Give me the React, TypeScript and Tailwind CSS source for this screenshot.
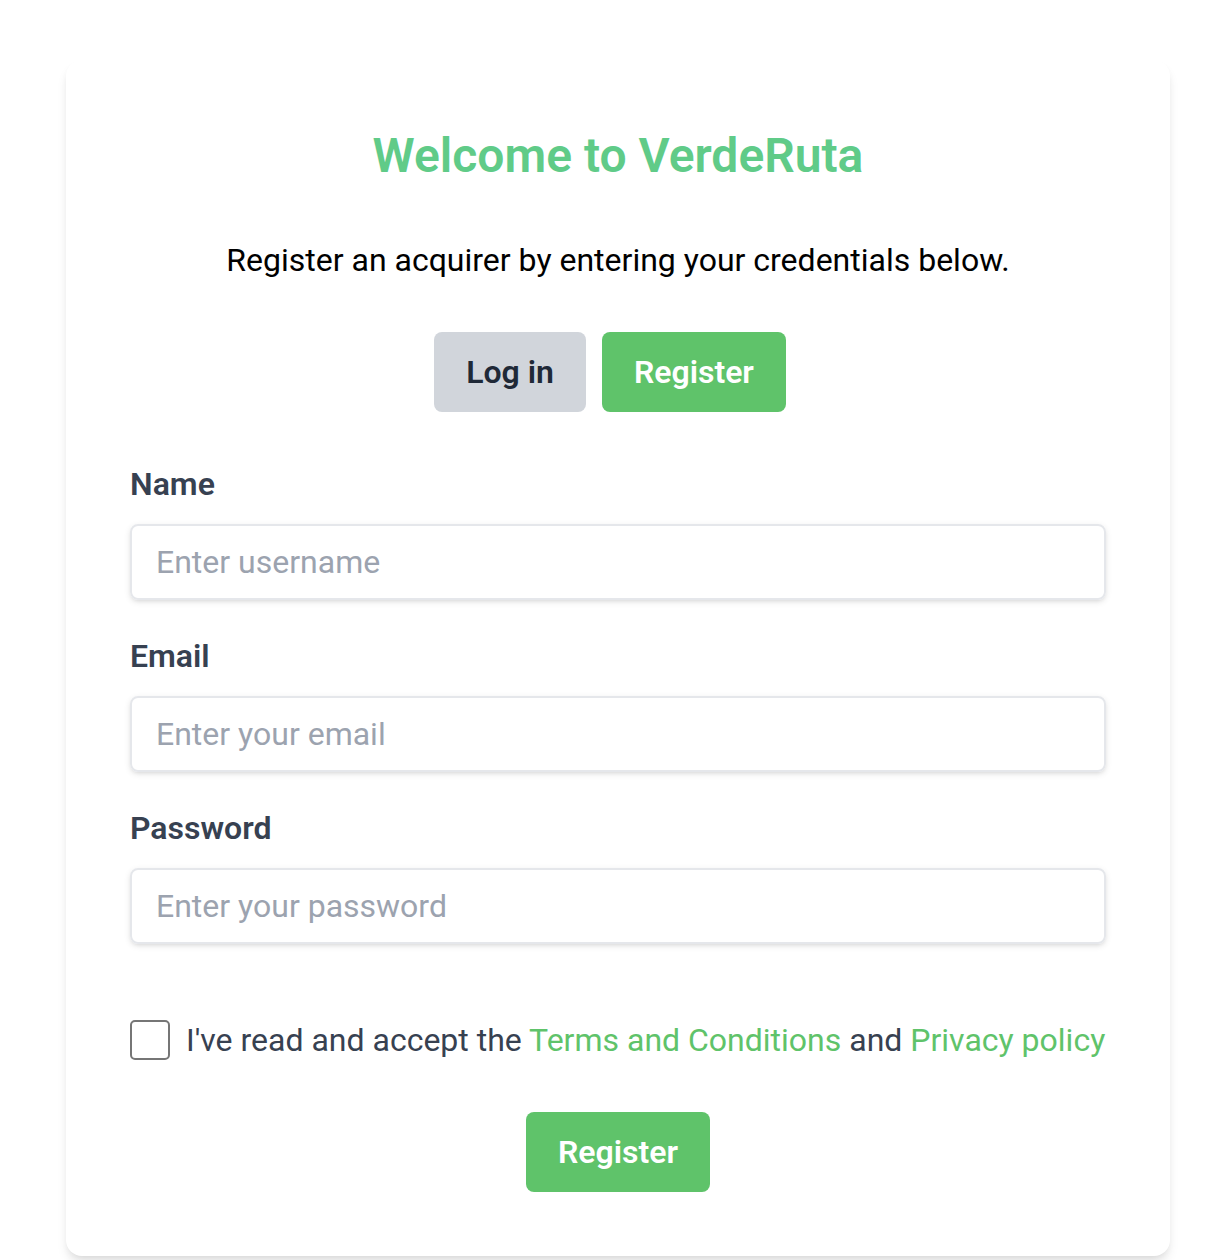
import { useState } from "react";

const fields = [
  { id: "name", label: "Name", type: "text", placeholder: "Enter username" },
  { id: "email", label: "Email", type: "email", placeholder: "Enter your email" },
  { id: "password", label: "Password", type: "password", placeholder: "Enter your password" },
];

export default function App() {
  const [accepted, setAccepted] = useState(false);

  return (
    <main className="bg-white pt-15 pr-14 pb-1 pl-[66px] font-[Roboto,sans-serif] text-[32px] leading-12 text-black">
      <section className="mx-auto w-full max-w-[1104px] rounded-2xl bg-white p-16 shadow-[0_8px_12px_-2px_rgba(0,0,0,0.1),0_4px_8px_-4px_rgba(0,0,0,0.1)]">
        <h1 className="text-center text-[48px] leading-16 font-semibold text-[#60cb88]">Welcome to VerdeRuta</h1>
        <p className="mt-12 text-center">Register an acquirer by entering your credentials below.</p>
        <div className="mt-12 flex justify-center gap-4 pr-4">
          <button type="button" className="rounded-lg bg-[#d1d5db] px-8 py-4 font-semibold text-[#1f2937]">
            Log in
          </button>
          <button type="button" className="rounded-lg bg-[#5fc36a] px-8 py-4 font-semibold text-white">
            Register
          </button>
        </div>
        <form className="mt-12" onSubmit={(e) => e.preventDefault()}>
          {fields.map((f) => (
            <div key={f.id} className="mb-8">
              <label htmlFor={f.id} className="mb-4 block font-semibold text-[#374151]">
                {f.label}
              </label>
              <input
                id={f.id}
                type={f.type}
                placeholder={f.placeholder}
                className="block h-19 w-full rounded-lg border-2 border-[#e5e7eb] px-6 shadow-[0_2px_6px_0_rgba(0,0,0,0.1),0_2px_4px_-2px_rgba(0,0,0,0.1)] placeholder:text-[#9ca3af]"
              />
            </div>
          ))}
          <div className="mt-18 flex items-center gap-4">
            <input
              id="terms"
              type="checkbox"
              checked={accepted}
              onChange={(e) => setAccepted(e.target.checked)}
              className="size-10 shrink-0 appearance-none rounded-[5px] border-2 border-[#767676] checked:bg-[#5fc36a]"
            />
            <label htmlFor="terms" className="whitespace-nowrap text-[#374151]">
              I've read and accept the{" "}
              <a href="#terms" className="text-[#5fc36a]">Terms and Conditions</a> and{" "}
              <a href="#privacy" className="text-[#5fc36a]">Privacy policy</a>
            </label>
          </div>
          <div className="mt-12 flex justify-center">
            <button type="submit" className="rounded-lg bg-[#5fc36a] px-8 py-4 font-semibold text-white">
              Register
            </button>
          </div>
        </form>
      </section>
    </main>
  );
}
